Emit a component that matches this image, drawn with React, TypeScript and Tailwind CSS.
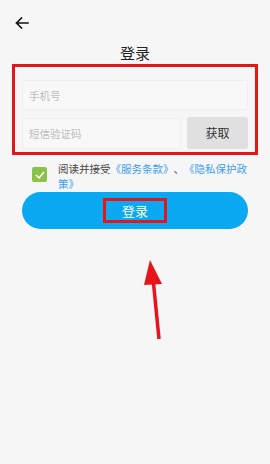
import { useState } from "react"

const font = { fontFamily: '"Noto Sans CJK SC", "Noto Sans", sans-serif' }

const BackArrow = () => (
  <svg width="14" height="12" viewBox="0 0 14 12" fill="none">
    <path d="M13 6H1.5M6.5 1L1.5 6l5 5" stroke="#111" strokeWidth="1.6" strokeLinecap="square" />
  </svg>
)

const App = () => {
  const [agreed, setAgreed] = useState(true)

  return (
    <div className="relative w-[270px] h-[464px] bg-[#f6f6f6] overflow-hidden [text-spacing-trim:space-all]" style={font}>
      {/* header */}
      <div className="pt-[17px] pl-[15px] h-[42px]">
        <button className="block">
          <BackArrow />
        </button>
      </div>
      <h1 className="text-center text-[15px] leading-[21px] text-[#222]">登录</h1>

      {/* form */}
      <div className="mx-[12px] mt-[1px] border-[3px] border-[#e8141c] px-[7px] pt-[13px] pb-[3px] flex flex-col gap-[8px]">
        <input
          className="h-[30px] w-full rounded-[3px] bg-[#f8f8f8] border border-[#efefef] px-[6px] text-[10.5px] outline-none placeholder:text-[#bdbdbd]"
          placeholder="手机号"
        />
        <div className="flex gap-[6px]">
          <input
            className="h-[31px] flex-1 min-w-0 rounded-[3px] bg-[#f8f8f8] border border-[#efefef] px-[6px] text-[10.5px] outline-none placeholder:text-[#bdbdbd]"
            placeholder="短信验证码"
          />
          <button className="h-[32px] -mt-[1px] w-[61px] rounded-[3px] bg-[#e0e0e0] text-[12px] text-[#333]">获取</button>
        </div>
      </div>

      {/* agreement */}
      <div className="flex items-start mt-[6px] pl-[32px] pr-[20px]">
        <button
          onClick={() => setAgreed(!agreed)}
          className="mt-[6px] w-[15px] h-[15px] shrink-0 rounded-[2px] bg-[#8bc34a] flex items-center justify-center"
        >
          {agreed && (
            <svg width="10" height="8" viewBox="0 0 10 8" fill="none">
              <path d="M1 4l3 3 5-6" stroke="#fff" strokeWidth="1.5" />
            </svg>
          )}
        </button>
        <p className="ml-[11px] text-[10.5px] leading-[15px] text-[#444]">
          阅读并接受<span className="text-[#3a9ef0]">《服务条款》</span>、<span className="text-[#3a9ef0]">《隐私保护政策》</span>
        </p>
      </div>

      {/* submit */}
      <div className="px-[22px] mt-[1px]">
        <button className="w-full h-[37px] rounded-full bg-[#0aa9f2] flex items-center justify-center">
          <span className="border-[3px] border-[#e8141c] w-[64px] h-[25px] flex items-center justify-center text-[13px] text-white">
            登录
          </span>
        </button>
      </div>

      {/* annotation arrow */}
      <svg className="absolute left-0 top-0" width="270" height="464" viewBox="0 0 270 464">
        <path d="M159 339L153.5 283" stroke="#e8141c" strokeWidth="3.5" />
        <path d="M150 260L144 285L162 284Z" fill="#e8141c" />
      </svg>
    </div>
  )
}

export default App
